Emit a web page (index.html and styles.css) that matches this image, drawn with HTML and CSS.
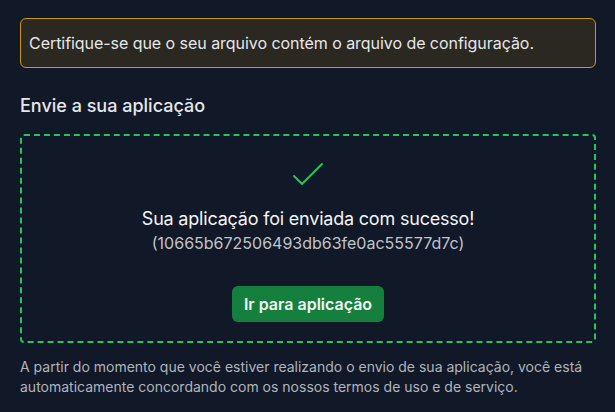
FILE: index.html
```html
<!DOCTYPE html>
<html lang="pt-BR">
<head>
<meta charset="utf-8">
<link rel="stylesheet" href="styles.css">
</head>
<body>
<main class="page">
  <div class="alert">Certifique-se que o seu arquivo contém o arquivo de configuração.</div>
  <h2 class="heading">Envie a sua aplicação</h2>
  <section class="dropzone">
    <svg class="check" width="48" height="48" viewBox="0 0 24 24" fill="none" stroke="currentColor" stroke-width="1" stroke-linecap="round" stroke-linejoin="round"><path d="M5 13l4 4L19 7"/></svg>
    <p class="title">Sua aplicação foi enviada com sucesso!</p>
    <p class="hash">(10665b672506493db63fe0ac55577d7c)</p>
    <button class="btn">Ir para aplicação</button>
  </section>
  <p class="terms">A partir do momento que você estiver realizando o envio de sua aplicação, você está automaticamente concordando com os nossos termos de uso e de serviço.</p>
</main>
</body>
</html>
```
FILE: styles.css
```css
html, body {
  margin: 0;
  background: #111827;
}
body {
  font-family: Inter, "Noto Sans", sans-serif;
  color: #e5e7eb;
}
.page {
  padding: 18px 19px 0 20px;
  display: flex;
  flex-direction: column;
}
.alert {
  border: 1px solid #ca9a0a;
  background: #2a2820;
  border-radius: 6px;
  padding: 12px 8px;
  font-size: 16px;
  line-height: 24px;
  letter-spacing: -0.05px;
  color: #e5e7eb;
}
.heading {
  margin: 24px 0 14px;
  font-size: 18px;
  line-height: 28px;
  font-weight: 500;
  color: #e5e7eb;
}
.dropzone {
  border: 2px dashed #22c55e;
  border-radius: 4px;
  display: flex;
  flex-direction: column;
  align-items: center;
  padding: 14px 20px 19px;
}
.check {
  color: #22c55e;
  display: block;
}
.title {
  margin: 7px 0 0;
  font-size: 18px;
  line-height: 28px;
  letter-spacing: -0.2px;
  color: #f3f4f6;
}
.hash {
  margin: 0;
  font-size: 16px;
  line-height: 20px;
  color: #c0c4cc;
}
.btn {
  margin-top: 33px;
  background: #15803d;
  color: #f3f4f6;
  border: 0;
  border-radius: 6px;
  height: 36px;
  padding: 0 12px;
  font-family: inherit;
  font-size: 16px;
  font-weight: 600;
}
.terms {
  margin: 14px 0 0;
  font-size: 14px;
  line-height: 20px;
  color: #b0b5bd;
}
```
